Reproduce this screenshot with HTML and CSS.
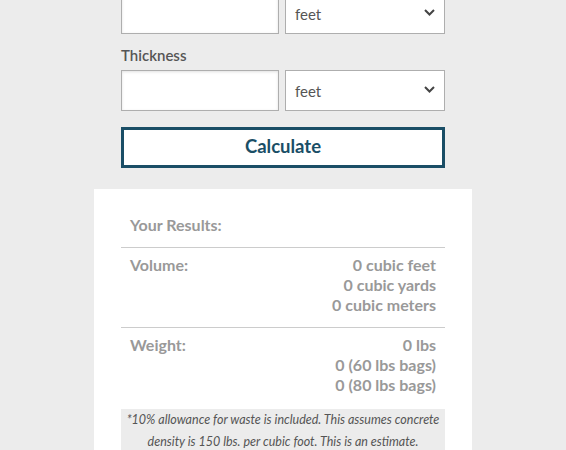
FILE: index.html
```html
<!DOCTYPE html>
<html>
<head>
<meta charset="utf-8">
<link rel="stylesheet" href="styles.css">
</head>
<body>
<div class="form">
  <div class="row first">
    <div class="input"></div>
    <div class="select"><span>feet</span><svg class="chev" width="11" height="7" viewBox="0 0 11 7"><path d="M1 1 L5.5 5.5 L10 1" fill="none" stroke="#444" stroke-width="2"/></svg></div>
  </div>
  <div class="label">Thickness</div>
  <div class="row">
    <div class="input"></div>
    <div class="select"><span>feet</span><svg class="chev" width="11" height="7" viewBox="0 0 11 7"><path d="M1 1 L5.5 5.5 L10 1" fill="none" stroke="#444" stroke-width="2"/></svg></div>
  </div>
  <button class="calc">Calculate</button>
</div>
<div class="card">
  <div class="res-head">Your Results:</div>
  <div class="res-row">
    <div class="res-name">Volume:</div>
    <div class="res-vals">0 cubic feet<br>0 cubic yards<br>0 cubic meters</div>
  </div>
  <div class="res-row last">
    <div class="res-name">Weight:</div>
    <div class="res-vals">0 lbs<br>0 (60 lbs bags)<br>0 (80 lbs bags)</div>
  </div>
  <div class="note">*10% allowance for waste is included. This assumes concrete density is 150 lbs. per cubic foot. This is an estimate.</div>
</div>
</body>
</html>
```

FILE: styles.css
```css
html, body {
  margin: 0;
  padding: 0;
  background: #ececec;
  font-family: Lato, "Open Sans", sans-serif;
  overflow: hidden;
}
.form {
  width: 324px;
  margin: 0 auto;
}
.row {
  display: flex;
  gap: 6px;
}
.row.first {
  margin-top: -7px;
}
.input, .select {
  box-sizing: border-box;
  height: 41px;
  background: #fff;
  border: 1px solid #aeaeae;
}
.input {
  width: 158px;
  box-shadow: inset 0 1px 3px rgba(0,0,0,0.12);
}
.select {
  width: 160px;
  display: flex;
  align-items: center;
  justify-content: space-between;
  padding: 0 9px 0 9px;
  font-size: 15px;
  color: #555;
}
.chev {
  display: block;
  margin-top: -2px;
}
.label {
  font-size: 15px;
  font-weight: 600;
  color: #555;
  line-height: 20px;
  margin: 11px 0 5px;
}
.calc {
  display: block;
  box-sizing: border-box;
  width: 324px;
  height: 41px;
  margin-top: 16px;
  background: #fff;
  border: 3px solid #1a4e66;
  color: #1a4e66;
  font-family: Lato, sans-serif;
  font-size: 18.5px;
  font-weight: 700;
  padding: 0 0 3px;
}
.card {
  box-sizing: border-box;
  width: 378px;
  margin: 21px auto 0;
  background: #fff;
  padding: 19px 27px 20px;
  color: #999;
  font-size: 16px;
  line-height: 20px;
  font-weight: 700;
}
.res-head {
  padding: 7px 9px 12px;
  border-bottom: 1px solid #ccc;
}
.res-row {
  display: flex;
  justify-content: space-between;
  padding: 7px 9px 12px;
  border-bottom: 1px solid #ccc;
}
.res-row.last {
  border-bottom: none;
  padding-bottom: 14px;
}
.res-vals {
  text-align: right;
}
.note {
  background: #ececec;
  color: #555;
  font-style: italic;
  font-weight: 400;
  font-size: 12.5px;
  line-height: 22px;
  text-align: center;
  padding: 0 2px 4px;
}
```
